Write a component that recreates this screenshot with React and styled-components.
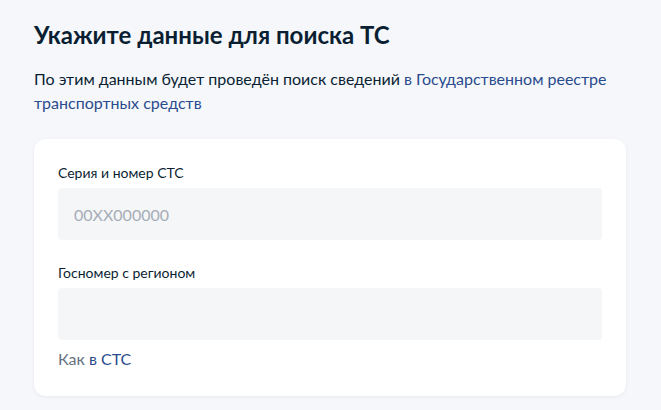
import React from 'react'
import styled, { createGlobalStyle } from 'styled-components'

const GlobalStyle = createGlobalStyle`
	html, body {
		margin: 0;
		padding: 0;
		background-color: #f5f7fb;
	}
	body {
		font-family: Lato, "Noto Sans", sans-serif;
		color: #0b1f33;
	}
`

const Page = styled.div`
	padding: 19px 34px 14px 34px;
	width: 592px;
`

const Title = styled.h1`
	margin: 0;
	font-size: 24px;
	line-height: 32px;
	font-weight: 700;
	color: #0b1f33;
`

const Lead = styled.p`
	margin: 16px 0 0 0;
	font-size: 16px;
	line-height: 24px;
	color: #0b1f33;
`

const Link = styled.a`
	color: #2a4b8d;
	text-decoration: none;
`

const Card = styled.div`
	margin-top: 24px;
	background-color: #fff;
	border-radius: 12px;
	box-shadow: 0 1px 4px rgba(11, 31, 51, 0.06);
	padding: 24px 24px 25px 24px;
	display: flex;
	flex-direction: column;
`

const Field = styled.div`
	display: flex;
	flex-direction: column;
	gap: 5px;
	margin-bottom: ${({ $last }) => ($last ? '7px' : '23px')};
`

const Label = styled.label`
	font-size: 14px;
	line-height: 20px;
	color: #0b1f33;
`

const Input = styled.input`
	box-sizing: border-box;
	height: 52px;
	width: 100%;
	border: none;
	border-radius: 4px;
	background-color: #f5f6f8;
	padding: 0 16px;
	font-family: Lato, "Noto Sans", sans-serif;
	font-size: 16px;
	color: #0b1f33;
	outline: none;
	&::placeholder {
		color: #a5adb7;
	}
`

const Hint = styled.div`
	font-size: 16px;
	line-height: 24px;
	color: #66727f;
`

export default () => {
	return (
		<Page>
			<GlobalStyle />
			<Title>Укажите данные для поиска ТС</Title>
			<Lead>
				По этим данным будет проведён поиск сведений{' '}
				<Link href="#">в Государственном реестре транспортных средств</Link>
			</Lead>
			<Card>
				<Field>
					<Label htmlFor="sts">Серия и номер СТС</Label>
					<Input id="sts" type="text" placeholder="00XX000000" />
				</Field>
				<Field $last>
					<Label htmlFor="gosnomer">Госномер с регионом</Label>
					<Input id="gosnomer" type="text" />
				</Field>
				<Hint>Как <Link href="#">в СТС</Link></Hint>
			</Card>
		</Page>
	)
}
